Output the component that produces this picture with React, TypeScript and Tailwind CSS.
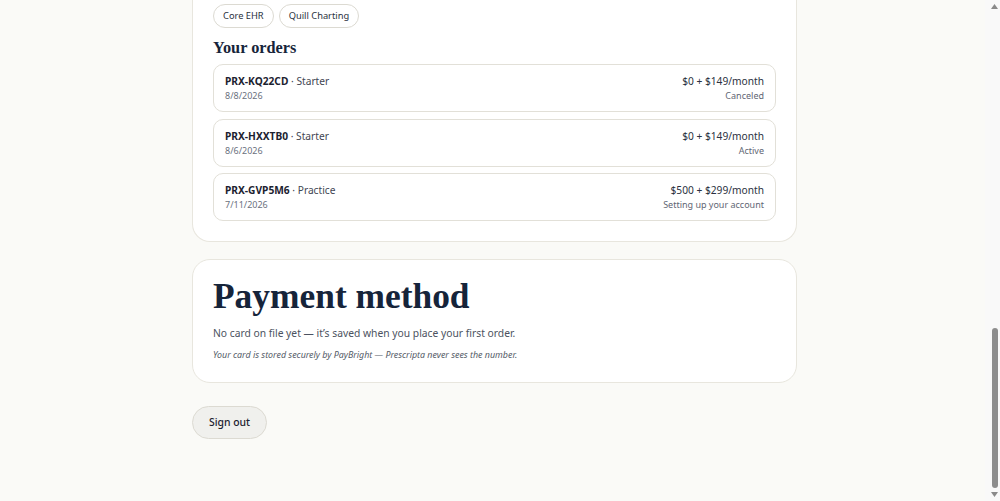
import React from 'react';

type Order = { id: string; plan: string; date: string; price: string; status: string };

const orders: Order[] = [
  { id: 'PRX-KQ22CD', plan: 'Starter', date: '8/8/2026', price: '$0 + $149/month', status: 'Canceled' },
  { id: 'PRX-HXXTB0', plan: 'Starter', date: '8/6/2026', price: '$0 + $149/month', status: 'Active' },
  { id: 'PRX-GVP5M6', plan: 'Practice', date: '7/11/2026', price: '$500 + $299/month', status: 'Setting up your account' },
];

const products = ['Core EHR', 'Quill Charting'];

const serif = "font-['Liberation_Serif',Georgia,serif]";
const sans = "font-['Noto_Sans','Segoe_UI',sans-serif]";

function OrderRow({ o }: { o: Order }) {
  return (
    <div className="flex items-center justify-between rounded-[10px] border border-[#e2e0d8] bg-white px-[11px] py-2">
      <div>
        <p className="text-[10.2px] leading-[16px] text-[#3f4652]">
          <span className="font-bold text-[#1c2230]">{o.id}</span> · {o.plan}
        </p>
        <p className="text-[9px] leading-[14px] text-[#6b7180]">{o.date}</p>
      </div>
      <div className="text-right">
        <p className="text-[10.2px] leading-[16px] text-[#2a3140]">{o.price}</p>
        <p className="text-[9px] leading-[14px] text-[#5f6674]">{o.status}</p>
      </div>
    </div>
  );
}

// classic window scrollbar, thumb resting at the bottom
function Scrollbar() {
  return (
    <div className="flex w-[15px] flex-col bg-[#f9f9f9]">
      <div className="flex h-3 items-center justify-center pl-[4px]">
        <svg width="7" height="5" viewBox="0 0 7 5"><polygon points="3.5,0 7,5 0,5" fill="#8a8a8a" /></svg>
      </div>
      <div className="flex flex-1 flex-col justify-end pl-[7px] pr-[2px]">
        <div className="h-[160px] w-[6px] rounded-full bg-[#8d8d8d]" />
      </div>
      <div className="flex h-[13px] items-center justify-center pl-[4px]">
        <svg width="7" height="5" viewBox="0 0 7 5"><polygon points="0,0 7,0 3.5,5" fill="#8a8a8a" /></svg>
      </div>
    </div>
  );
}

export default function App() {
  return (
    <div className={`${sans} flex h-screen overflow-hidden bg-[#fafaf7] text-[#1c2230]`}>
      <main className="flex flex-1 flex-col pl-1">
        <div className="mx-auto flex w-[605px] flex-col">
          {/* Account card: products and order history */}
          <section className="rounded-b-[18px] border border-t-0 border-[#e8e6de] bg-white px-5 pb-5 pt-1">
            <div className="flex gap-[5px]">
              {products.map((t) => (
                <span
                  key={t}
                  className="rounded-full border border-[#dcdad2] bg-white px-[9px] py-1 text-[9.3px] leading-[14px] text-[#2a3140]"
                >
                  {t}
                </span>
              ))}
            </div>
            <h3 className={`${serif} mt-[10px] text-[16.3px] font-bold leading-[20px] text-[#16243a]`}>Your orders</h3>
            <div className="mt-[6px] flex flex-col gap-[6.5px]">
              {orders.map((o) => (
                <OrderRow key={o.id} o={o} />
              ))}
            </div>
          </section>

          {/* Payment method */}
          <section className="mt-[17px] rounded-[18px] border border-[#e8e6de] bg-white px-5 pb-5 pt-[14px]">
            <h2 className={`${serif} text-[35.4px] font-bold leading-[44px] text-[#16243a]`}>Payment method</h2>
            <p className="mt-[7px] text-[10.3px] leading-[16px] text-[#4b5260]">
              No card on file yet — it’s saved when you place your first order.
            </p>
            <p className="mt-[7px] text-[8.9px] italic leading-[14px] text-[#555c68]">
              Your card is stored securely by PayBright — Prescripta never sees the number.
            </p>
          </section>

          <button className="mt-[23px] w-fit rounded-full border border-[#dcdad2] bg-[#f0f0ed] px-4 py-[8px] text-[10.4px] font-medium leading-[15px] text-[#1c2230]">
            Sign out
          </button>
        </div>
      </main>
      <Scrollbar />
    </div>
  );
}
